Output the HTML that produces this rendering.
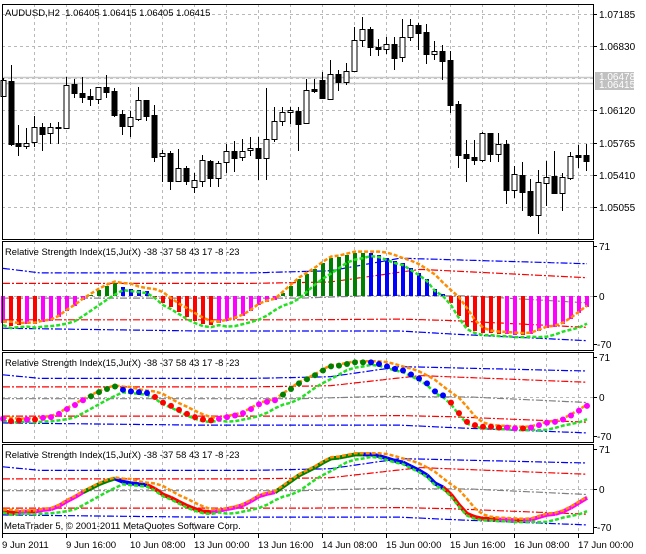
<!DOCTYPE html>
<html><head><meta charset="utf-8"><style>
html,body{margin:0;padding:0;background:#fff;width:646px;height:554px;overflow:hidden}
svg{display:block}
text{font-family:"Liberation Sans",sans-serif;font-size:10px;fill:#000}
</style></head><body>
<svg id="s" width="646" height="554" xmlns="http://www.w3.org/2000/svg"></svg>
<script>
var S=document.getElementById('s'),o='';
function L(x1,y1,x2,y2,c,w,d){o+='<line x1="'+x1+'" y1="'+y1+'" x2="'+x2+'" y2="'+y2+'" stroke="'+c+'" stroke-width="'+(w||1)+'"'+(d?' stroke-dasharray="'+d+'"':'')+'/>';}
function T(x,y,t,a){o+='<text x="'+x+'" y="'+y+'"'+(a||'')+'>'+t+'</text>';}
function P(pts,c,w,d){o+='<polyline fill="none" points="'+pts.map(function(p){return p[0].toFixed(1)+','+p[1].toFixed(1)}).join(' ')+'" stroke="'+c+'" stroke-width="'+w+'"'+(d?' stroke-dasharray="'+d+'"':'')+' stroke-linejoin="round"/>';}
var X0=2,X1=593;
var panels=[[4,239],[241,350],[352,442],[444,533]];
for(var k=0;k<18;k++){var gx=34+32*k;if(gx<X1)panels.forEach(function(p){L(gx+.5,p[0],gx+.5,p[1],'#b8b8b8',1,'3 3');});}
var prices=[[14,'1.07185'],[46,'1.06830'],[110,'1.06120'],[143,'1.05765'],[175,'1.05410'],[207,'1.05055']];
prices.forEach(function(p){L(X0,p[0]+.5,X1,p[0]+.5,'#b8b8b8',1,'3 3');L(X1,p[0]+.5,X1+4,p[0]+.5,'#000');T(599,p[0]+4,p[1]);});
L(X0,78.5,X1,78.5,'#c0c0c0',1,'3 3');
L(X0,77.5,X1,77.5,'#c8c8c8',1.5);L(X0,83.5,X1,83.5,'#c8c8c8',1.5);
var C=[[3,'W',78,80,96,96],[11,'B',65,81,144,146],[18,'B',125,143,146,156],[26,'W',128,143,146,149],[34,'W',116,127,142,147],[42,'B',123,127,134,151],[50,'W',123,127,133,144],[58,'W',122,127,128,144],[66,'W',77,85,128,128],[74,'B',79,84,93,98],[82,'B',77,93,97,103],[90,'B',89,96,99,106],[98,'W',87,87,99,104],[106,'B',75,87,92,98],[114,'B',88,91,115,117],[122,'B',110,114,126,135],[130,'W',111,117,126,137],[138,'W',87,100,119,121],[146,'B',100,100,116,121],[154,'B',105,115,157,162],[162,'W',150,153,156,182],[170,'B',151,153,181,190],[178,'W',149,168,181,181],[186,'B',166,168,181,185],[194,'W',173,180,187,193],[202,'W',155,160,181,187],[210,'B',160,161,178,187],[218,'W',161,163,178,187],[226,'W',144,151,162,173],[234,'B',141,151,158,172],[242,'W',139,151,157,161],[250,'W',137,148,150,156],[258,'B',137,148,158,180],[266,'W',88,139,158,180],[274,'W',107,121,139,142],[282,'W',107,112,121,126],[290,'W',107,110,112,124],[298,'B',107,111,124,151],[306,'W',79,90,123,123],[314,'B',79,89,91,93],[322,'B',72,80,98,98],
[330,'W',60,74,99,99],[338,'B',70,74,82,91],[346,'W',63,71,82,85],[354,'W',27,40,71,72],[362,'W',17,29,40,47],[370,'B',27,29,47,56],[378,'B',39,47,49,56],[386,'W',37,44,49,54],[394,'B',37,44,58,70],[402,'W',19,37,57,62],[410,'W',19,25,37,41],[418,'B',23,25,33,50],[426,'B',24,32,54,64],[434,'W',41,51,54,60],[442,'B',45,51,61,80],[450,'B',51,60,105,113],[458,'B',101,104,155,168],[466,'B',140,154,158,182],[474,'B',140,157,160,165],[482,'W',132,133,160,162],[490,'B',133,133,154,162],[498,'W',133,144,154,162],[506,'B',140,144,190,204],[514,'W',166,174,190,198],[522,'B',162,175,192,211],[530,'B',179,191,215,217],[538,'W',170,182,215,234],[546,'W',161,177,183,206],[554,'B',151,176,193,193],[562,'W',173,177,193,211],[570,'W',152,156,178,180],[578,'B',145,155,157,168],[586,'B',144,155,161,171]];
C.forEach(function(c){var x=c[0]+.5;L(x,c[2],x,c[5],'#000');var h=Math.max(c[4]-c[3],1);o+='<rect x="'+(c[0]-2)+'" y="'+(c[3]+.5)+'" width="5" height="'+h+'" fill="'+(c[1]=='B'?'#000':'#fff')+'" stroke="#000" stroke-width="1"/>';});
o+='<rect x="595" y="72" width="39" height="18" fill="#c0c0c0"/>';
T(599,80,'1.06478',' style="fill:#fff"');T(599,88,'1.06415',' style="fill:#fff"');
T(5,16,'AUDUSD,H2&#160;&#160;1.06405 1.06415 1.06405 1.06415',' style="font-size:9.5px"');
var H=[323,326,325,324,324,322,321,317,311,306,300,295,290,286,283,287,289,290,291,296,303,307,312,317,321,324,325,323,321,319,316,311,305,302,300,293,286,279,274,269,263,258,257,255,253,253,253,255,258,261,263,268,273,279,289,294,303,316,327,331,333,333,334,334,335,335,334,331,328,327,324,319,313,307];
var V=H.map(function(y){return (296-y)/0.7;});
var col="MRRMRMMMMMMGGGGBBBBRRRRRRRRMMMMMMMMGGGGGGGGGGGBBBBBBBBBBRRRRRRRMMRMMMMMMMM";
var CM={M:'#ff00ff',R:'#ff0000',G:'#008000',B:'#0000ff'};
function lag(i,n){var j=Math.max(0,i-n);return V[j];}
var OR=V.map(function(v,i){var a=lag(i,2.0),b=lag(i,1);return Math.max(v,(a+b)/2)+2;});
var GR=V.map(function(v,i){var a=lag(i,3),b=lag(i,2);return Math.min(v,(a+b)/2)-3;});
function interp(pts,x){for(var i=1;i<pts.length;i++){if(x<=pts[i][0]){var t=(x-pts[i-1][0])/(pts[i][0]-pts[i-1][0]);return pts[i-1][1]+t*(pts[i][1]-pts[i-1][1]);}}return pts[pts.length-1][1];}
var bands=[
 [[[0,40],[40,33],[250,33],[330,36],[400,54],[590,46]],'#0000ff'],
 [[[0,18],[250,18],[330,20],[420,38],[590,26]],'#ff0000'],
 [[[0,-3],[300,-3],[380,1],[470,0],[590,-10]],'#808080'],
 [[[0,-34],[300,-34],[400,-33],[450,-35],[590,-45]],'#ff0000'],
 [[[0,-46],[200,-50],[400,-50],[460,-55],[590,-64]],'#0000ff']];
var subs=[[296,0.70,246,344,241,350],[397,0.563,357,436,352,442],[489,0.563,449,527,444,533]];
subs.forEach(function(sp,pi){
 var z=sp[0],sc=sp[1];function Y(v){return z-v*sc;}
 L(X0,z+.5,X1,z+.5,'#b8b8b8',1,'3 3');
 bands.forEach(function(b){var pts=[];for(var x=3;x<=588;x+=4)pts.push([x,Y(interp(b[0],x))]);P(pts,b[1],1.2,'7 2 2 2');});
 if(pi==0){V.forEach(function(v,i){var x=3+8*i,y=Y(v);o+='<rect x="'+(x-2)+'" y="'+Math.min(y,z)+'" width="4" height="'+Math.max(Math.abs(y-z),1)+'" fill="'+CM[col[i]]+'"/>';});}
 var op=OR.map(function(v,i){return [3+8*i,Y(v)];}),gp=GR.map(function(v,i){return [3+8*i,Y(v)];});
 if(pi==2){for(var i=1;i<V.length;i++){P([[3+8*(i-1),Y(V[i-1])],[3+8*i,Y(V[i])]],CM[col[i]],4);}}
 P(op,'#ff8c00',2.5,'4 2');P(gp,'#22e022',2.5,'4 2');
 if(pi==1){V.forEach(function(v,i){o+='<circle cx="'+(3+8*i)+'" cy="'+Y(v)+'" r="3" fill="'+CM[col[i]]+'"/>';});}
 T(5,sp[4]+14,'Relative Strength Index(15,JurX) -38 -37 58 43 17 -8 -23',' style="font-size:9.4px"');
 T(599,sp[2]+4,'71');T(599,z+4,'0');T(597,sp[3]+4,'-70');
 L(X1,sp[2]+.5,X1+4,sp[2]+.5,'#000');L(X1,z+.5,X1+4,z+.5,'#000');L(X1,sp[3]+.5,X1+4,sp[3]+.5,'#000');
});
o+='<rect x="0" y="239.5" width="600" height="1.5" fill="#fff"/>';
panels.forEach(function(p){o+='<rect x="'+(X0+.5)+'" y="'+(p[0]+.5)+'" width="'+(X1-X0)+'" height="'+(p[1]-p[0])+'" fill="none" stroke="#000" stroke-width="1"/>';});
T(4,529,'MetaTrader 5, © 2001-2011 MetaQuotes Software Corp.',' style="font-size:9.5px"');
var dates=[[2,'9 Jun 2011'],[66,'9 Jun 16:00'],[130,'10 Jun 08:00'],[194,'13 Jun 00:00'],[258,'13 Jun 16:00'],[322,'14 Jun 08:00'],[386,'15 Jun 00:00'],[450,'15 Jun 16:00'],[514,'16 Jun 08:00'],[578,'17 Jun 00:00']];
dates.forEach(function(d){L(d[0]+.5,533,d[0]+.5,538,'#000');T(d[0],548,d[1],' style="font-size:9.6px"');});
S.innerHTML=o;
</script>
</body></html>
